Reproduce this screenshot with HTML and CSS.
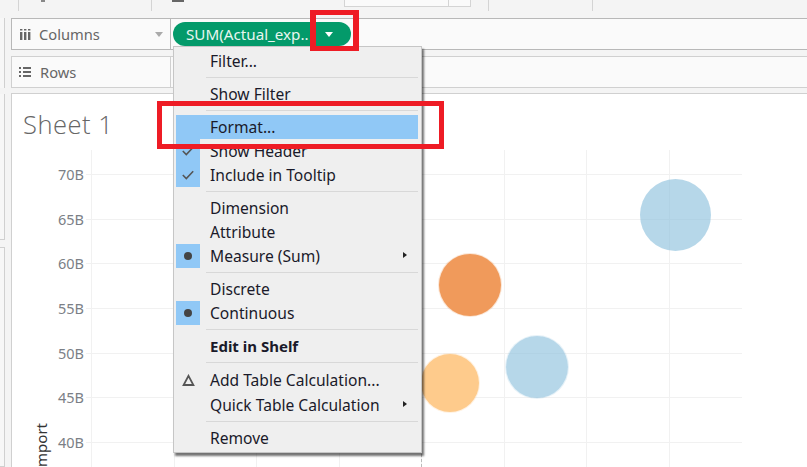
FILE: index.html
```html
<!DOCTYPE html>
<html lang="en">
<head>
    <meta charset="UTF-8">
    <title>Sheet 1</title>
    <link rel="stylesheet" href="styles.css">
</head>
<body>
    <div class="toolbar">
        <span class="tool tool-first"></span>
        <span class="tool tool-second"><i class="tool-mark"></i><i class="tool-icon"></i></span>
        <span class="tool-space"></span>
        <span class="tool-box"><i class="tool-box-cell"></i></span>
        <span class="tool tool-third"></span>
        <span class="tool tool-fourth"></span>
    </div>

    <div class="upper">
        <div class="strip"></div>
        <div class="shelves">
            <div class="shelf shelf-columns">
                <div class="shelf-label">
                    <svg class="shelf-icon" width="11" height="11" viewBox="0 0 11 11"><path d="M0 3h2.400v8H0zM4 3h2.400v8H4zM8 3h2.400v8H8zM0 0h2.400v1.500H0zM4 0h2.400v1.500H4zM8 0h2.400v1.500H8z" fill="#666"/></svg>
                    <span class="shelf-name">Columns</span>
                    <span class="shelf-caret"></span>
                </div>
                <div class="pill">
                    <span class="pill-text">SUM(Actual_exp..</span>
                    <span class="pill-caret"></span>
                </div>
            </div>
            <div class="shelf-gap"></div>
            <div class="shelf shelf-rows">
                <div class="shelf-label">
                    <svg class="shelf-icon icon-rows" width="12" height="10" viewBox="0 0 12 10"><path d="M0 0h2v2H0zM4 0h8v2H4zM0 4h2v2H0zM4 4h8v2H4zM0 8h2v2H0zM4 8h8v2H4z" fill="#666"/></svg>
                    <span class="shelf-name">Rows</span>
                </div>
            </div>
        </div>
    </div>
    <div class="shelf-gap shelf-gap-last"></div>

    <div class="main">
        <div class="side">
            <div class="side-top"></div>
            <div class="side-bottom"></div>
        </div>
        <div class="sheet">
            <h1 class="sheet-title">Sheet 1</h1>
        </div>
    </div>

    <div class="chart">
        <div class="tick" style="top: 174px"><span>70B</span></div>
        <div class="tick" style="top: 219px"><span>65B</span></div>
        <div class="tick" style="top: 263px"><span>60B</span></div>
        <div class="tick" style="top: 308px"><span>55B</span></div>
        <div class="tick" style="top: 353px"><span>50B</span></div>
        <div class="tick" style="top: 397px"><span>45B</span></div>
        <div class="tick" style="top: 442px"><span>40B</span></div>
        <div class="vline" style="left: 91px"></div>
        <div class="vline" style="left: 174px"></div>
        <div class="vline" style="left: 256px"></div>
        <div class="vline" style="left: 339px"></div>
        <div class="vline" style="left: 421px"></div>
        <div class="vline" style="left: 504px"></div>
        <div class="vline" style="left: 586px"></div>
        <div class="vline" style="left: 669px"></div>
        <div class="vline-dashed"></div>
        <div class="bubble blue big"></div>
        <div class="bubble dark-orange"></div>
        <div class="bubble blue small"></div>
        <div class="bubble light-orange"></div>
        <div class="axis-title">Import</div>
    </div>

    <ul class="menu">
        <li class="item">Filter...</li>
        <li class="sep"></li>
        <li class="item">Show Filter</li>
        <li class="sep"></li>
        <li class="item item-active">Format...</li>
        <li class="item"><span class="mark mark-on"><svg width="12" height="10" viewBox="0 0 12 10"><path d="M.8 5l3.500 3.500L11.200 1.300" fill="none" stroke="#555" stroke-width="1.600"/></svg></span>Show Header</li>
        <li class="item"><span class="mark mark-on"><svg width="12" height="10" viewBox="0 0 12 10"><path d="M.8 5l3.500 3.500L11.200 1.300" fill="none" stroke="#555" stroke-width="1.600"/></svg></span>Include in Tooltip</li>
        <li class="sep"></li>
        <li class="item">Dimension</li>
        <li class="item">Attribute</li>
        <li class="item"><span class="mark mark-on"><i class="dot"></i></span>Measure (Sum)<i class="arrow"></i></li>
        <li class="sep"></li>
        <li class="item">Discrete</li>
        <li class="item"><span class="mark mark-on"><i class="dot"></i></span>Continuous</li>
        <li class="sep"></li>
        <li class="item item-bold">Edit in Shelf</li>
        <li class="sep"></li>
        <li class="item item-add"><span class="mark"><svg width="13" height="12" viewBox="0 0 13 12"><path d="M6.500 1.800L11.400 11H1.600z" fill="none" stroke="#555" stroke-width="1.800"/></svg></span>Add Table Calculation...</li>
        <li class="item">Quick Table Calculation<i class="arrow"></i></li>
        <li class="sep"></li>
        <li class="item">Remove</li>
    </ul>

    <div class="callout callout-caret"></div>
    <div class="callout callout-format"></div>
</body>
</html>
```

FILE: styles.css
```css
* {
    box-sizing: border-box;
}

body {
    font-family: "Noto Sans", "Open Sans", sans-serif;
    margin: 0;
    width: 807px;
    height: 467px;
    overflow: hidden;
    position: relative;
    background-color: #f4f4f4;
    color: #555;
}

/* top strip */
.toolbar {
    height: 18px;
    display: flex;
    background-color: #f4f4f4;
}

.tool {
    height: 11px;
    border-right: 1px solid #d4d4d4;
    position: relative;
}

.tool-first { width: 19px; }
.tool-second { width: 133px; }
.tool-third { width: 18px; }
.tool-fourth { width: 104px; }
.tool-space { width: 192px; }

.tool-mark {
    position: absolute;
    left: 22px;
    top: 0;
    width: 4px;
    height: 2px;
    background-color: #888;
}

.tool-icon {
    position: absolute;
    left: 153px;
    top: 0;
    width: 12px;
    height: 2px;
    background-color: #666;
}

.tool-box {
    width: 127px;
    height: 7px;
    display: flex;
    justify-content: flex-end;
    background-color: #fafafa;
    border-left: 1px solid #d4d4d4;
    border-right: 1px solid #d4d4d4;
    border-bottom: 1px solid #d4d4d4;
}

.tool-box-cell {
    width: 22px;
    border-left: 1px solid #d4d4d4;
}

/* shelves */
.upper {
    display: flex;
}

.strip {
    width: 5px;
    height: 70px;
    flex: none;
    background-color: #f7f7f7;
    border-right: 1px solid #d0d0d0;
}

.shelves {
    flex: 1;
    margin-left: 6px;
}

.shelf {
    height: 32px;
    display: flex;
    gap: 2px;
    background-color: #fafafa;
}

.shelf-columns {
    border-top: 1px solid #b8b8b8;
    border-bottom: 1px solid #b8b8b8;
}

.shelf-rows {
    border-top: 1px solid #d0d0d0;
    border-bottom: 1px solid #d0d0d0;
}

.shelf-gap {
    height: 6px;
}

.shelf-gap-last {
    margin-left: 11px;
    border-bottom: 1px solid #d0d0d0;
}

.shelf-label {
    width: 160px;
    display: flex;
    align-items: center;
    padding-left: 8px;
    gap: 8px;
    border-left: 1px solid #b8b8b8;
    border-right: 1px solid #b8b8b8;
    font-size: 14.700px;
    color: #666;
}

.shelf-rows .shelf-label {
    border-color: #d0d0d0;
}

.icon-rows {
    margin-left: -1px;
    margin-right: 1px;
}

.shelf-caret {
    margin-left: auto;
    margin-right: 7px;
    border-left: 4px solid transparent;
    border-right: 4px solid transparent;
    border-top: 5px solid #aaa;
}

.pill {
    width: 178px;
    height: 24px;
    margin-top: 3px;
    padding-left: 13px;
    border-radius: 12px;
    display: flex;
    align-items: center;
    background-color: #039a6a;
    color: #e8f6f0;
    font-size: 15.200px;
}

.pill-text {
    width: 138px;
    white-space: nowrap;
}

.pill-caret {
    margin-left: 1px;
    border-left: 4.500px solid transparent;
    border-right: 4.500px solid transparent;
    border-top: 5px solid #fff;
}

/* sheet */
.main {
    height: 373px;
    display: flex;
}

.side {
    width: 11px;
    flex: none;
    display: flex;
    flex-direction: column;
    gap: 7px;
}

.side-top,
.side-bottom {
    width: 5px;
    background-color: #f7f7f7;
    border-right: 1px solid #d0d0d0;
    border-bottom: 1px solid #d0d0d0;
}

.side-top { height: 146px; }
.side-bottom { flex: 1; border-top: 1px solid #d0d0d0; }

.sheet {
    flex: 1;
    background-color: #fff;
    border-left: 1px solid #d0d0d0;
}

.sheet-title {
    margin: 12px 0 0 11px;
    font-family: "Open Sans", "Noto Sans", sans-serif;
    font-size: 25.500px;
    line-height: 36px;
    font-weight: 300;
    color: #666;
    letter-spacing: 0.5px;
}

/* the chart is a free canvas over the sheet */
.chart {
    position: absolute;
    inset: 0;
    overflow: hidden;
}

.axis-title {
    position: absolute;
    left: 13px;
    top: 434px;
    width: 56px;
    font-size: 15px;
    line-height: 20px;
    color: #333;
    transform: rotate(-90deg);
    transform-origin: center;
}

.tick {
    position: absolute;
    left: 86px;
    width: 656px;
    height: 1px;
    background-color: #f1f1f1;
}

.tick span {
    position: absolute;
    right: 658px;
    top: -10px;
    font-size: 14.500px;
    line-height: 20px;
    color: #7b7f86;
}

.vline {
    position: absolute;
    top: 150px;
    bottom: 0;
    width: 1px;
    background-color: #f1f1f1;
}

.vline-dashed {
    position: absolute;
    left: 421px;
    top: 454px;
    bottom: 0;
    border-left: 1px dashed #bbb;
}

.bubble {
    position: absolute;
    border-radius: 50%;
}

.blue {
    background-color: rgba(137, 190, 220, 0.62);
}

.big {
    left: 640px;
    top: 179px;
    width: 71px;
    height: 72px;
}

.small {
    left: 506px;
    top: 336px;
    width: 62px;
    height: 62px;
    box-shadow: 0 0 0 1px rgba(137, 190, 220, 0.2);
}

.dark-orange {
    left: 439px;
    top: 254px;
    width: 62px;
    height: 62px;
    background-color: #f09a5b;
    box-shadow: 0 0 0 1px rgba(240, 154, 91, 0.25);
}

.light-orange {
    left: 421px;
    top: 354px;
    width: 58px;
    height: 58px;
    background-color: #fecb8c;
    box-shadow: 0 0 0 1px rgba(254, 203, 140, 0.25);
}

/* context menu */
.menu {
    position: absolute;
    left: 173px;
    top: 46px;
    width: 249px;
    height: 407px;
    margin: 0;
    padding: 2px 3px 0 2px;
    list-style: none;
    background-color: #efefef;
    border: 1px solid #c6c6c6;
    box-shadow: 2px 3px 2px rgba(0, 0, 0, 0.55);
    font-size: 15.600px;
    color: #1a1a2a;
}

.item {
    height: 24px;
    line-height: 24px;
    padding-left: 34px;
    position: relative;
    white-space: nowrap;
}

.item-active {
    background-color: #90c8f6;
}

.item-bold {
    font-size: 15px;
    font-weight: 700;
}

.item-add {
    height: 25px;
    margin-top: 5px;
}

.sep {
    height: 1px;
    margin: 4px 0 4px 30px;
    background-color: #d8d8d8;
}

.mark {
    position: absolute;
    left: 0;
    top: 0;
    width: 24px;
    height: 24px;
    display: flex;
    align-items: center;
    justify-content: center;
}

.mark-on {
    background-color: #90c8f6;
}

.dot {
    width: 8px;
    height: 8px;
    border-radius: 50%;
    background-color: #444;
}

.arrow {
    position: absolute;
    right: 11px;
    top: 8px;
    border-top: 3.500px solid transparent;
    border-bottom: 3.500px solid transparent;
    border-left: 4px solid #222;
}

/* red highlight boxes */
.callout {
    position: absolute;
    border: 5px solid #ee1c25;
}

.callout-caret {
    left: 310px;
    top: 10px;
    width: 49px;
    height: 41px;
    border-left-width: 6px;
    border-right-width: 6px;
}

.callout-format {
    left: 157px;
    top: 101px;
    width: 287px;
    height: 48px;
}
```
